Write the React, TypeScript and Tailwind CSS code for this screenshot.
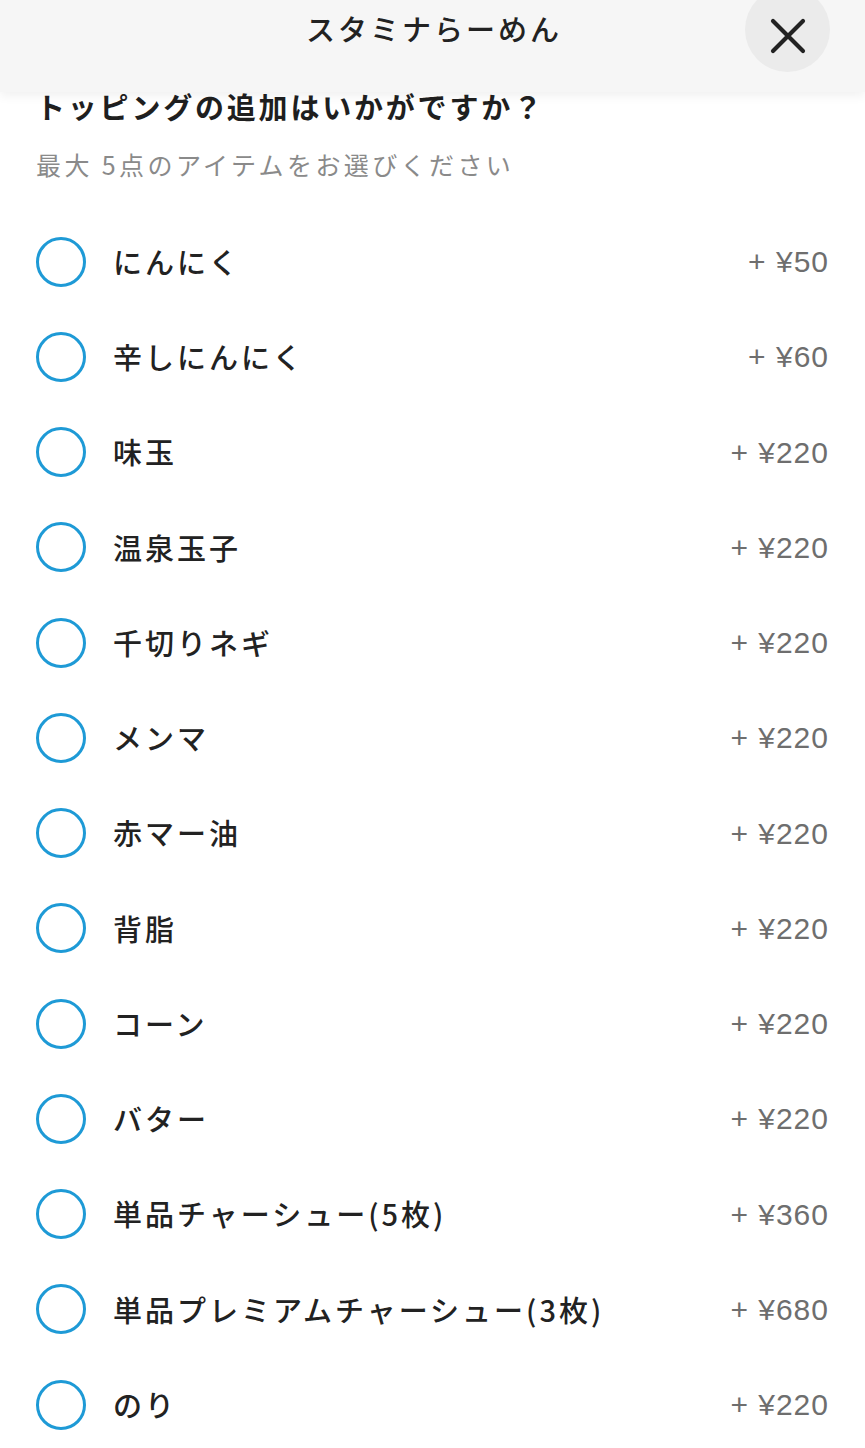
const toppings = [
  { name: "にんにく", price: 50 },
  { name: "辛しにんにく", price: 60 },
  { name: "味玉", price: 220 },
  { name: "温泉玉子", price: 220 },
  { name: "千切りネギ", price: 220 },
  { name: "メンマ", price: 220 },
  { name: "赤マー油", price: 220 },
  { name: "背脂", price: 220 },
  { name: "コーン", price: 220 },
  { name: "バター", price: 220 },
  { name: "単品チャーシュー(5枚)", price: 360 },
  { name: "単品プレミアムチャーシュー(3枚)", price: 680 },
  { name: "のり", price: 220 },
]

const jp = { fontFamily: '"Noto Sans CJK JP", "Noto Sans", sans-serif' }
const latin = { fontFamily: '"Liberation Sans", Arial, sans-serif' }

function Header() {
  return (
    <header className="absolute left-0 top-0 z-10 flex h-[92px] w-full items-start justify-center bg-[#f6f6f6] shadow-[0_4px_10px_rgba(0,0,0,0.06)]">
      <h1 className="mt-[8px] pl-[3px] text-[29px] font-medium leading-[40px] tracking-[3px] text-[#222]" style={jp}>
        スタミナらーめん
      </h1>
      <button className="absolute right-[35px] top-[-13px] flex h-[85px] w-[85px] items-center justify-center rounded-full bg-[#ebebeb]">
        <svg width="36" height="36" viewBox="0 0 36 36" className="mt-[12px]">
          <path d="M3 3 L33 33 M33 3 L3 33" stroke="#222" strokeWidth="4.2" strokeLinecap="round" />
        </svg>
      </button>
    </header>
  )
}

export default function App() {
  return (
    <div className="relative min-h-screen w-[865px] overflow-hidden bg-white">
      <Header />

      <main className="px-[36px] pt-[86px]">
        <h2 className="text-[29px] font-bold leading-[40px] tracking-[2.8px] text-[#1f1f1f]" style={jp}>
          トッピングの追加はいかがですか？
        </h2>
        <p className="mt-[20px] text-[25px] leading-[36px] tracking-[3.4px] text-[#8a8a8a]" style={jp}>
          最大 5点のアイテムをお選びください
        </p>

        <ul className="mt-[32px]">
          {toppings.map((t) => (
            <li key={t.name} className="flex h-[95.25px] items-center">
              <span className="h-[50px] w-[50px] shrink-0 rounded-full border-[3.5px] border-[#1e9ad6]" />
              <span className="ml-[27px] flex-1 text-[29px] font-medium tracking-[3px] text-[#222]" style={jp}>
                {t.name}
              </span>
              <span className="text-[30px] tracking-[1px] text-[#6e6e6e]" style={latin}>
                + ¥{t.price}
              </span>
            </li>
          ))}
        </ul>
      </main>
    </div>
  )
}
